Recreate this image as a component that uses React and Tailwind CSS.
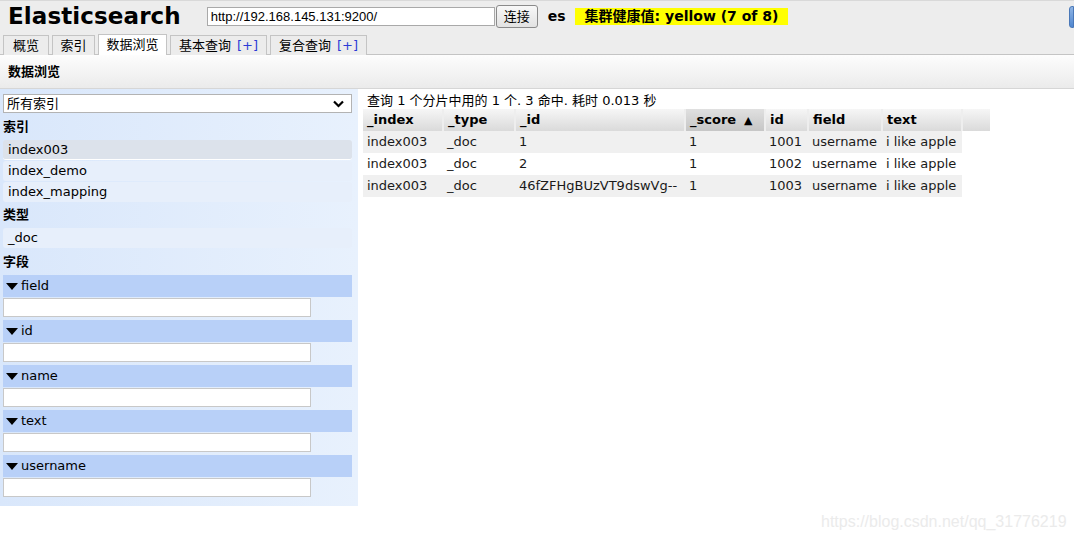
import React from "react";

const FONT = "font-['DejaVu_Sans','Noto_Sans_CJK_SC',sans-serif]";

const TABS = [
  { label: "概览", w: "w-[46px]" },
  { label: "索引", w: "w-[43px]" },
  { label: "数据浏览", w: "w-[69px]", active: true },
  { label: "基本查询", w: "w-[97px]", plus: true },
  { label: "复合查询", w: "w-[97px]", plus: true },
];

const FIELDS = ["field", "id", "name", "text", "username"];

const COLS = [
  { key: "_index", w: "w-[80px]" },
  { key: "_type", w: "w-[72px]" },
  { key: "_id", w: "w-[170px]" },
  { key: "_score", w: "w-[80px]", sorted: true },
  { key: "id", w: "w-[43px]" },
  { key: "field", w: "w-[74px]" },
  { key: "text", w: "w-[80px]" },
];

const ROWS = [
  ["index003", "_doc", "1", "1", "1001", "username", "i like apple"],
  ["index003", "_doc", "2", "1", "1002", "username", "i like apple"],
  ["index003", "_doc", "46fZFHgBUzVT9dswVg--", "1", "1003", "username", "i like apple"],
];

function Triangle() {
  return (
    <svg width="12" height="7" viewBox="0 0 12 7" className="mr-[3px]">
      <path d="M0 0 L12 0 L6 7 Z" fill="#000" />
    </svg>
  );
}

export default function App() {
  return (
    <div className={`${FONT} relative w-[1074px] h-[538px] bg-white text-black overflow-hidden`}>
      {/* ── top header ─────────────────────────────── */}
      <div className="bg-[#ededed] border-t border-[#d9d9d9]">
        <div className="flex items-center h-[31px] pl-[8px]">
          <h1 className="text-[23px] font-bold leading-none tracking-[0.1px]">Elasticsearch</h1>
          <div className="ml-[26px] w-[288px] h-[19px] bg-white border border-[#a9a9a9] text-[13px] leading-[17px] pl-[3px] font-['Liberation_Sans',sans-serif]">
            http://192.168.145.131:9200/
          </div>
          <button className="ml-[1px] w-[42px] h-[23px] border border-[#8a8a8a] rounded-[3px] bg-gradient-to-b from-[#f8f8f8] to-[#e2e2e2] text-[13px] leading-none">
            连接
          </button>
          <span className="ml-[10px] text-[14px] font-bold">es</span>
          <span className="ml-[9px] h-[17px] bg-[#ffff00] px-[10px] text-[14px] font-bold leading-[17px]">
            集群健康值: yellow (7 of 8)
          </span>
          <div className="ml-auto w-[5px] h-[22px] bg-gradient-to-b from-[#8fb4e4] to-[#4f86cf] rounded-l-[3px] border border-[#4a78b8]" />
        </div>

        {/* tabs */}
        <div className="flex items-end gap-[3px] pl-[3px] pt-[2px] border-b border-[#c4c4c4]">
          {TABS.map((t) => (
            <div
              key={t.label}
              className={`${t.w} h-[20px] -mb-px border border-b-0 border-[#c4c4c4] flex items-center justify-center text-[13px] ${
                t.active ? "bg-white h-[21px]" : "bg-[#ececec]"
              }`}
            >
              {t.label}
              {t.plus && <span className="ml-[6px] text-[#2a3bd6]">[+]</span>}
            </div>
          ))}
        </div>
      </div>

      {/* ── section title bar ──────────────────────── */}
      <div className="h-[34px] flex items-center pl-[8px] bg-gradient-to-b from-[#fdfdfd] to-[#ebebeb] border-b border-[#d6d6d6]">
        <span className="text-[13px] font-bold">数据浏览</span>
      </div>

      <div className="flex items-start">
        {/* ── left sidebar ─────────────────────────── */}
        <div className="w-[358px] bg-gradient-to-r from-[#d9e7fb] to-[#e8f1fd] pl-[3px] pr-[6px] pt-[5px] pb-[9px]">
          <div className="w-[349px] h-[19px] bg-white border border-[#b3b3b3] flex items-center justify-between pl-[3px] pr-[7px] text-[13px]">
            <span>所有索引</span>
            <svg width="11" height="8" viewBox="0 0 11 8">
              <path d="M1 1.5 L5.5 6 L10 1.5" stroke="#000" strokeWidth="2.2" fill="none" />
            </svg>
          </div>

          <div className="h-[27px] flex items-center text-[13px] font-bold">索引</div>
          <div className="flex flex-col gap-[1px]">
            <div className="h-[20px] pl-[5px] flex items-center text-[13px] rounded-[3px] bg-[#dce2eb] border-b border-white">index003</div>
            <div className="h-[20px] pl-[5px] flex items-center text-[13px] rounded-[3px] bg-[#e7effb]">index_demo</div>
            <div className="h-[20px] pl-[5px] flex items-center text-[13px] rounded-[3px] bg-[#e7effb]">index_mapping</div>
          </div>

          <div className="h-[26px] flex items-center text-[13px] font-bold">类型</div>
          <div className="h-[20px] pl-[5px] flex items-center text-[13px] rounded-[3px] bg-[#e7effb]">_doc</div>

          <div className="h-[27px] flex items-center text-[13px] font-bold">字段</div>
          <div className="flex flex-col gap-[3px]">
            {FIELDS.map((f) => (
              <div key={f} className="flex flex-col gap-[1px]">
                <div className="h-[22px] bg-[#b8d0f8] flex items-center pl-[3px] text-[13px]">
                  <Triangle />
                  {f}
                </div>
                <div className="w-[308px] h-[19px] bg-white border border-[#c8c8c8]" />
              </div>
            ))}
          </div>
        </div>

        {/* ── results ──────────────────────────────── */}
        <div className="pl-[5px] pt-[4px]">
          <div className="pl-[4px] h-[16px] text-[13px] leading-[16px]">
            查询 1 个分片中用的 1 个. 3 命中. 耗时 0.013 秒
          </div>
          <table className="border-collapse text-[13px]">
            <thead>
              <tr>
                {COLS.map((c) => (
                  <th
                    key={c.key}
                    className={`${c.w} h-[22px] px-[4px] text-left font-bold whitespace-nowrap border-r-2 border-[#eeeeee] bg-gradient-to-b ${
                      c.sorted ? "from-[#e0e0e0] to-[#c6c6c6]" : "from-[#f6f6f6] to-[#dadada]"
                    }`}
                  >
                    {c.key}
                    {c.sorted && <span className="ml-[8px] text-[11px]">▲</span>}
                  </th>
                ))}
                <th className="w-[28px] h-[22px] bg-gradient-to-b from-[#f6f6f6] to-[#dadada]" />
              </tr>
            </thead>
            <tbody>
              {ROWS.map((r, i) => (
                <tr key={i} className={i % 2 === 0 ? "bg-[#f0f0f0]" : "bg-white"}>
                  {r.map((v, j) => (
                    <td key={j} className="h-[22px] px-[4px] whitespace-nowrap text-[#1a1a1a]">
                      {v}
                    </td>
                  ))}
                  <td className="bg-white" />
                </tr>
              ))}
            </tbody>
          </table>
        </div>
      </div>

      {/* watermark */}
      <div className="absolute left-[821px] top-[510px] text-[16px] text-[#ebebeb] font-['Liberation_Sans',sans-serif]">
        https://blog.csdn.net/qq_31776219
      </div>
    </div>
  );
}
